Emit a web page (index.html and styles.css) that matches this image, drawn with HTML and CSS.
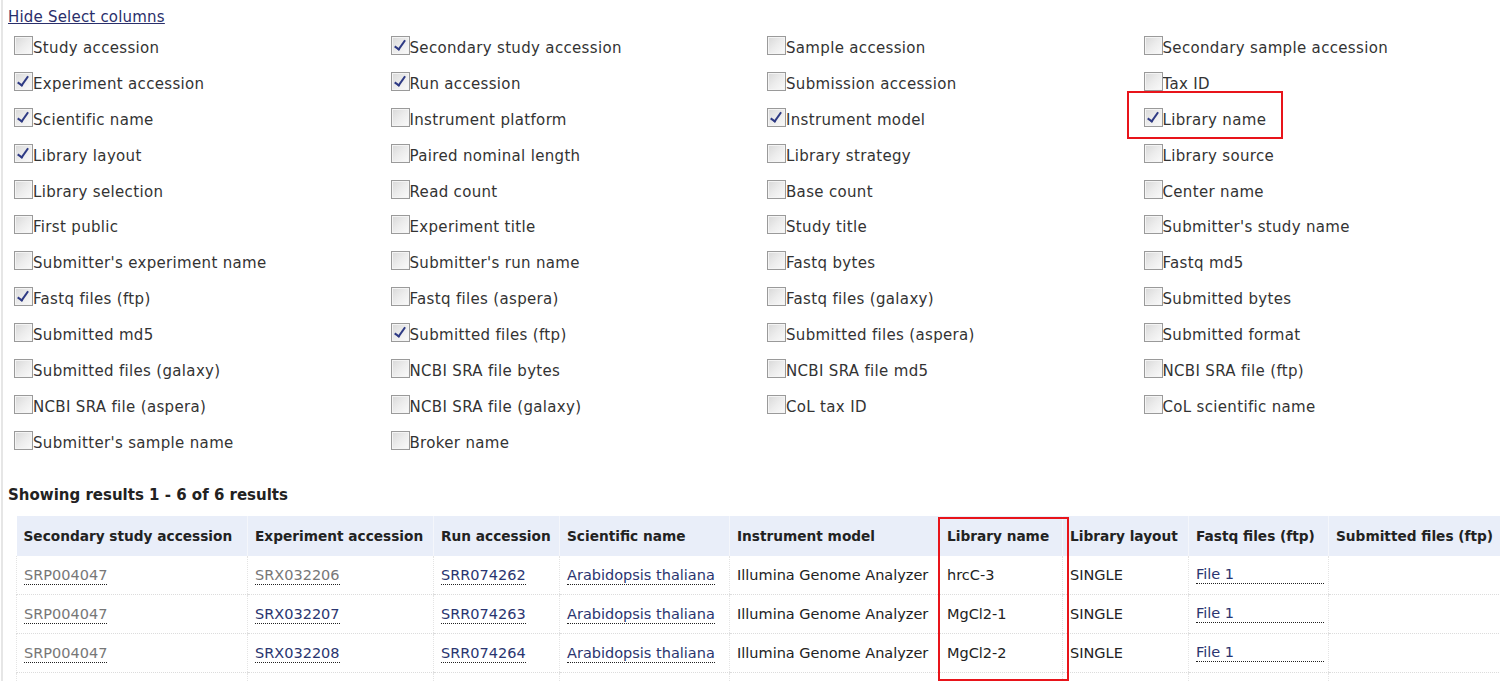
FILE: index.html
```html
<!DOCTYPE html>
<html>
<head>
<meta charset="utf-8">
<link rel="stylesheet" href="styles.css">
</head>
<body>
<div class="page">
  <a class="toggle" href="#">Hide Select columns</a>
  <div class="colgrid">
    <label class="opt"><span class="cb"></span>Study accession</label>
    <label class="opt"><span class="cb on"></span>Secondary study accession</label>
    <label class="opt"><span class="cb"></span>Sample accession</label>
    <label class="opt"><span class="cb"></span>Secondary sample accession</label>

    <label class="opt"><span class="cb on"></span>Experiment accession</label>
    <label class="opt"><span class="cb on"></span>Run accession</label>
    <label class="opt"><span class="cb"></span>Submission accession</label>
    <label class="opt"><span class="cb"></span>Tax ID</label>

    <label class="opt"><span class="cb on"></span>Scientific name</label>
    <label class="opt"><span class="cb"></span>Instrument platform</label>
    <label class="opt"><span class="cb on"></span>Instrument model</label>
    <label class="opt hl"><span class="cb on"></span>Library name<span class="redbox box1"></span></label>

    <label class="opt"><span class="cb on"></span>Library layout</label>
    <label class="opt"><span class="cb"></span>Paired nominal length</label>
    <label class="opt"><span class="cb"></span>Library strategy</label>
    <label class="opt"><span class="cb"></span>Library source</label>

    <label class="opt"><span class="cb"></span>Library selection</label>
    <label class="opt"><span class="cb"></span>Read count</label>
    <label class="opt"><span class="cb"></span>Base count</label>
    <label class="opt"><span class="cb"></span>Center name</label>

    <label class="opt"><span class="cb"></span>First public</label>
    <label class="opt"><span class="cb"></span>Experiment title</label>
    <label class="opt"><span class="cb"></span>Study title</label>
    <label class="opt"><span class="cb"></span>Submitter's study name</label>

    <label class="opt"><span class="cb"></span>Submitter's experiment name</label>
    <label class="opt"><span class="cb"></span>Submitter's run name</label>
    <label class="opt"><span class="cb"></span>Fastq bytes</label>
    <label class="opt"><span class="cb"></span>Fastq md5</label>

    <label class="opt"><span class="cb on"></span>Fastq files (ftp)</label>
    <label class="opt"><span class="cb"></span>Fastq files (aspera)</label>
    <label class="opt"><span class="cb"></span>Fastq files (galaxy)</label>
    <label class="opt"><span class="cb"></span>Submitted bytes</label>

    <label class="opt"><span class="cb"></span>Submitted md5</label>
    <label class="opt"><span class="cb on"></span>Submitted files (ftp)</label>
    <label class="opt"><span class="cb"></span>Submitted files (aspera)</label>
    <label class="opt"><span class="cb"></span>Submitted format</label>

    <label class="opt"><span class="cb"></span>Submitted files (galaxy)</label>
    <label class="opt"><span class="cb"></span>NCBI SRA file bytes</label>
    <label class="opt"><span class="cb"></span>NCBI SRA file md5</label>
    <label class="opt"><span class="cb"></span>NCBI SRA file (ftp)</label>

    <label class="opt"><span class="cb"></span>NCBI SRA file (aspera)</label>
    <label class="opt"><span class="cb"></span>NCBI SRA file (galaxy)</label>
    <label class="opt"><span class="cb"></span>CoL tax ID</label>
    <label class="opt"><span class="cb"></span>CoL scientific name</label>

    <label class="opt"><span class="cb"></span>Submitter's sample name</label>
    <label class="opt"><span class="cb"></span>Broker name</label>
  </div>

  <h3 class="summary">Showing results 1 - 6 of 6 results</h3>

  <div class="tablewrap">
    <table class="results">
      <colgroup>
        <col style="width:231px"><col style="width:186px"><col style="width:126px"><col style="width:170px"><col style="width:210px"><col style="width:123px"><col style="width:126px"><col style="width:140px"><col style="width:180px">
      </colgroup>
      <thead>
        <tr>
          <th>Secondary study accession</th>
          <th>Experiment accession</th>
          <th>Run accession</th>
          <th>Scientific name</th>
          <th>Instrument model</th>
          <th>Library name</th>
          <th>Library layout</th>
          <th>Fastq files (ftp)</th>
          <th>Submitted files (ftp)</th>
        </tr>
      </thead>
      <tbody>
        <tr>
          <td><a class="lnk visited" href="#">SRP004047</a></td>
          <td><a class="lnk visited" href="#">SRX032206</a></td>
          <td><a class="lnk" href="#">SRR074262</a></td>
          <td><a class="lnk" href="#">Arabidopsis thaliana</a></td>
          <td>Illumina Genome Analyzer</td>
          <td>hrcC-3</td>
          <td>SINGLE</td>
          <td><a class="lnk block" href="#">File 1</a></td>
          <td></td>
        </tr>
        <tr>
          <td><a class="lnk visited" href="#">SRP004047</a></td>
          <td><a class="lnk" href="#">SRX032207</a></td>
          <td><a class="lnk" href="#">SRR074263</a></td>
          <td><a class="lnk" href="#">Arabidopsis thaliana</a></td>
          <td>Illumina Genome Analyzer</td>
          <td>MgCl2-1</td>
          <td>SINGLE</td>
          <td><a class="lnk block" href="#">File 1</a></td>
          <td></td>
        </tr>
        <tr>
          <td><a class="lnk visited" href="#">SRP004047</a></td>
          <td><a class="lnk" href="#">SRX032208</a></td>
          <td><a class="lnk" href="#">SRR074264</a></td>
          <td><a class="lnk" href="#">Arabidopsis thaliana</a></td>
          <td>Illumina Genome Analyzer</td>
          <td>MgCl2-2</td>
          <td>SINGLE</td>
          <td><a class="lnk block" href="#">File 1</a></td>
          <td></td>
        </tr>
        <tr class="cut">
          <td></td><td></td><td></td><td></td><td></td><td></td><td></td><td></td><td></td>
        </tr>
      </tbody>
    </table>
    <span class="redbox box2"></span>
  </div>
</div>
</body>
</html>
```

FILE: styles.css
```css
html, body {
  margin: 0;
  padding: 0;
  background: #fff;
  overflow: hidden;
}
body {
  font-family: "DejaVu Sans", Verdana, sans-serif;
  font-size: 15px;
  letter-spacing: 0.33px;
  color: #333;
}
.page {
  position: relative;
  margin-left: 1px;
  border-left: 2px solid #e6e6e6;
  padding: 7px 0 0 5px;
  min-height: 700px;
}
.toggle {
  display: inline-block;
  color: #2a2f6b;
  text-decoration: underline;
  line-height: 20px;
  letter-spacing: 0.2px;
}
.colgrid {
  display: grid;
  grid-template-columns: repeat(4, 376.5px);
  grid-auto-rows: 35.9px;
  margin: 3px 0 0 6px;
}
.opt {
  position: relative;
  display: flex;
  align-items: center;
  line-height: 20px;
  color: #333;
  white-space: nowrap;
}
.cb {
  display: inline-block;
  width: 17px;
  height: 17px;
  border: 1px solid #9a9a9a;
  background: linear-gradient(135deg, #d8d8d8 0%, #ececec 50%, #fafafa 100%);
  box-shadow: inset 0 0 0 1px #f4f4f4;
  margin-top: -5px;
  flex: none;
  position: relative;
}
.cb.on::after {
  content: "";
  position: absolute;
  left: 5px;
  top: 1px;
  width: 4px;
  height: 10px;
  border-right: 2px solid #2e3a84;
  border-bottom: 2px solid #2e3a84;
  transform: rotate(35deg);
}
.redbox {
  position: absolute;
  border: 2px solid #e8141a;
  pointer-events: none;
}
.box1 {
  left: -17px;
  top: -11px;
  width: 152px;
  height: 44px;
}
.summary {
  margin: 24px 0 0 0;
  font-size: 15px;
  font-weight: bold;
  color: #222;
  line-height: 20px;
  letter-spacing: 0;
}
.tablewrap {
  position: relative;
  margin: 11px 0 0 8px;
}
.results {
  border-collapse: collapse;
  table-layout: fixed;
  width: 1492px;
  letter-spacing: 0;
}
.results th {
  background: #e9eef9;
  color: #222;
  font-weight: bold;
  font-size: 13.7px;
  text-align: left;
  height: 40px;
  padding: 0 6px 0 7px;
  border-left: 1px solid #f4f6fb;
  white-space: nowrap;
}
.results th:first-child { border-left: none; }
.results td {
  height: 38px;
  padding: 0 6px 0 7px;
  border-bottom: 1px dotted #dcdcdc;
  border-left: 1px dotted #e4e4e4;
  font-size: 14.5px;
  color: #222;
  white-space: nowrap;
}
.results tr.cut td { height: 10px; border-bottom: none; }
.lnk {
  color: #2a3570;
  text-decoration: none;
  border-bottom: 1px dotted #222;
  padding-bottom: 1px;
}
.lnk.visited { color: #777; }
.lnk.block {
  display: block;
  width: 128px;
}
.box2 {
  left: 922px;
  top: 1px;
  width: 127px;
  height: 160px;
}
```
